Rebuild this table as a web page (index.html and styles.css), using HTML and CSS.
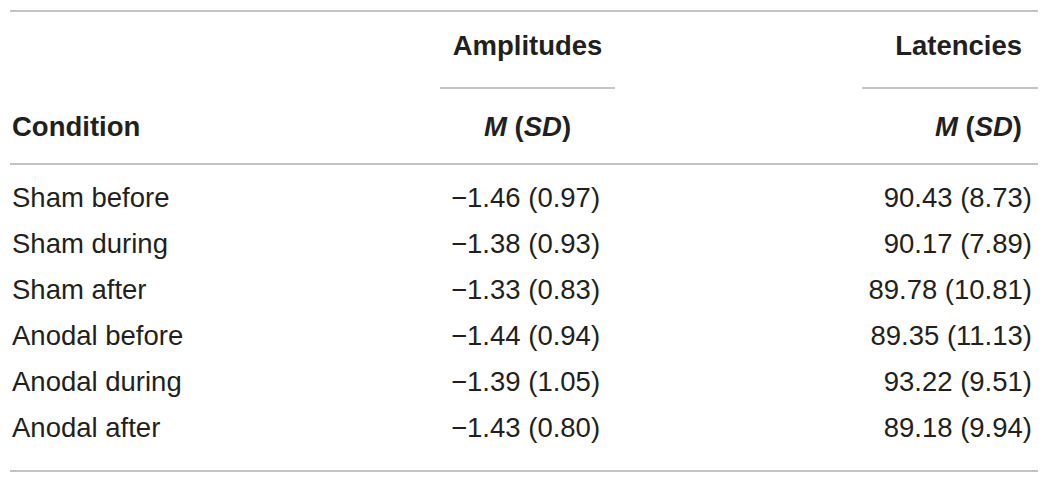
FILE: index.html
```html
<!DOCTYPE html>
<html lang="en">
<head>
<meta charset="utf-8">
<title>Amplitudes and latencies by condition</title>
<link rel="stylesheet" href="styles.css">
</head>
<body>
<table class="data">
  <colgroup>
    <col class="c-cond">
    <col class="c-amp">
    <col class="c-gap">
    <col class="c-lat">
  </colgroup>
  <thead>
    <tr class="h1">
      <th class="blank"></th>
      <th class="grp amp">Amplitudes</th>
      <th class="blank"></th>
      <th class="grp lat">Latencies</th>
    </tr>
    <tr class="h2">
      <th class="cond">Condition</th>
      <th class="amp"><i>M</i> (<i>SD</i>)</th>
      <th class="blank"></th>
      <th class="lat"><i>M</i> (<i>SD</i>)</th>
    </tr>
  </thead>
  <tbody>
    <tr><td class="cond">Sham before</td><td class="amp">&minus;1.46 (0.97)</td><td></td><td class="lat">90.43 (8.73)</td></tr>
    <tr><td class="cond">Sham during</td><td class="amp">&minus;1.38 (0.93)</td><td></td><td class="lat">90.17 (7.89)</td></tr>
    <tr><td class="cond">Sham after</td><td class="amp">&minus;1.33 (0.83)</td><td></td><td class="lat">89.78 (10.81)</td></tr>
    <tr><td class="cond">Anodal before</td><td class="amp">&minus;1.44 (0.94)</td><td></td><td class="lat">89.35 (11.13)</td></tr>
    <tr><td class="cond">Anodal during</td><td class="amp">&minus;1.39 (1.05)</td><td></td><td class="lat">93.22 (9.51)</td></tr>
    <tr><td class="cond">Anodal after</td><td class="amp">&minus;1.43 (0.80)</td><td></td><td class="lat">89.18 (9.94)</td></tr>
  </tbody>
</table>
</body>
</html>
```
FILE: styles.css
```css
html, body {
  margin: 0;
  padding: 0;
  background: #ffffff;
}

body {
  font-family: "Liberation Sans", Arial, Helvetica, sans-serif;
  color: #231f20;
}

.data {
  margin: 10px 0 0 10px;
  width: 1028px;
  border-collapse: collapse;
  table-layout: fixed;
  font-size: 27.5px;
  line-height: 32px;
  border-top: 2px solid #c4c4c4;
  border-bottom: 2px solid #c4c4c4;
}

.c-cond { width: 430px; }
.c-amp { width: 175px; }
.c-gap { width: 247px; }
.c-lat { width: 176px; }

th, td {
  padding: 0;
  white-space: nowrap;
}

th {
  font-weight: bold;
}

.h1 th {
  padding-top: 18px;
  padding-bottom: 25px;
}

.h1 th.grp {
  border-bottom: 2px solid #c4c4c4;
}

.h2 th {
  padding-top: 22px;
  padding-bottom: 20px;
  border-bottom: 2px solid #c4c4c4;
}

th.amp { text-align: center; }
th.lat { text-align: right; padding-right: 16px; }
th.cond { text-align: left; padding-left: 2px; }

td {
  font-weight: normal;
  padding-top: 7px;
  padding-bottom: 7px;
}

tbody tr:first-child td { padding-top: 17px; }
tbody tr:last-child td { padding-bottom: 26px; }

td.cond { text-align: left; padding-left: 2px; }
td.amp { text-align: left; padding-left: 11px; }
td.lat { text-align: right; padding-right: 6px; }
```
